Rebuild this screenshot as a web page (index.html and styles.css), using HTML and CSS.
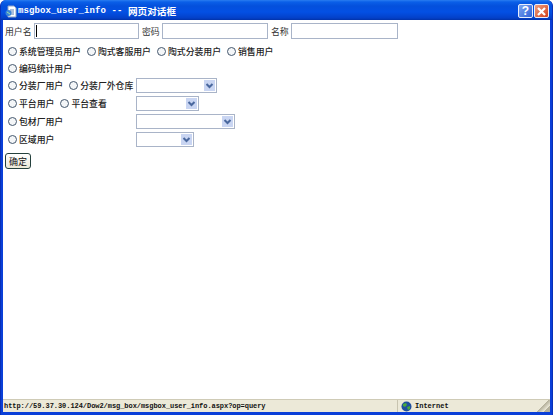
FILE: index.html
```html
<!DOCTYPE html>
<html lang="zh">
<head>
<meta charset="utf-8">
<title>msgbox_user_info</title>
<link rel="stylesheet" href="styles.css">
</head>
<body>
<div class="window">
  <header class="titlebar">
    <svg class="page-icon" width="13" height="13" viewBox="0 0 13 13"><path d="M3 1h6l2 2v9H3z" fill="#fff" stroke="#8fa4c8"/><path d="M5 5h4M5 7h4M5 9h4" stroke="#5b7fb8"/><circle cx="3.5" cy="8" r="3" fill="#3b86d8"/><path d="M2 7l3 2" stroke="#9fe0a0"/></svg>
    <span class="title-latin">msgbox_user_info -- </span><span class="title-cjk">网页对话框</span>
    <div class="title-buttons">
      <div class="tbtn help">?</div>
      <div class="tbtn close"><svg width="11" height="11" viewBox="0 0 11 11"><path d="M2 2l7 7M9 2l-7 7" stroke="#fff" stroke-width="2.2"/></svg></div>
    </div>
  </header>
  <main class="content">
    <div class="login-row">
      <label class="lbl l1">用户名</label><div class="field f1"><span class="caret"></span></div>
      <label class="lbl l2">密码</label><div class="field f2"></div>
      <label class="lbl l3">名称</label><div class="field f3"></div>
    </div>
    <div class="opt-row r1">
      <span class="opt gap6"><input type="radio" class="radio"><b>系统管理员用户</b></span>
      <span class="opt gap6"><input type="radio" class="radio"><b>陶式客服用户</b></span>
      <span class="opt gap6"><input type="radio" class="radio"><b>陶式分装用户</b></span>
      <span class="opt"><input type="radio" class="radio"><b>销售用户</b></span>
    </div>
    <div class="opt-row r2"><span class="opt"><input type="radio" class="radio"><b>编码统计用户</b></span></div>
    <div class="opt-row sel-row">
      <div class="opts"><span class="opt gap6"><input type="radio" class="radio"><b>分装厂用户</b></span><span class="opt"><input type="radio" class="radio"><b>分装厂外仓库</b></span></div>
      <div class="sel w81"><span class="arrow"><svg width="9" height="6" viewBox="0 0 9 6"><path d="M1.5 1l3 3 3-3" fill="none" stroke="#4a689e" stroke-width="2"/></svg></span></div>
    </div>
    <div class="opt-row sel-row">
      <div class="opts"><span class="opt gap6"><input type="radio" class="radio"><b>平台用户</b></span><span class="opt"><input type="radio" class="radio"><b>平台查看</b></span></div>
      <div class="sel w63"><span class="arrow"><svg width="9" height="6" viewBox="0 0 9 6"><path d="M1.5 1l3 3 3-3" fill="none" stroke="#4a689e" stroke-width="2"/></svg></span></div>
    </div>
    <div class="opt-row sel-row">
      <div class="opts"><span class="opt"><input type="radio" class="radio"><b>包材厂用户</b></span></div>
      <div class="sel w99"><span class="arrow"><svg width="9" height="6" viewBox="0 0 9 6"><path d="M1.5 1l3 3 3-3" fill="none" stroke="#4a689e" stroke-width="2"/></svg></span></div>
    </div>
    <div class="opt-row sel-row">
      <div class="opts"><span class="opt"><input type="radio" class="radio"><b>区域用户</b></span></div>
      <div class="sel w58"><span class="arrow"><svg width="9" height="6" viewBox="0 0 9 6"><path d="M1.5 1l3 3 3-3" fill="none" stroke="#4a689e" stroke-width="2"/></svg></span></div>
    </div>
    <button class="ok" type="button">确定</button>
  </main>
  <footer class="statusbar">
    <div class="status-url">http://59.37.30.124/Dow2/msg_box/msgbox_user_info.aspx?op=query</div>
    <div class="status-zone">
      <svg width="11" height="11" viewBox="0 0 11 11"><circle cx="5.5" cy="5.5" r="5" fill="#1f4f9e"/><path d="M2 3l3-1 1 2-2 2-2-1zM6 6l3-1 0 3-2 1z" fill="#49a83c"/></svg>
      <span>Internet</span>
    </div>
    <div class="status-grip"></div>
  </footer>
</div>
</body>
</html>
```
FILE: styles.css
```css
* { box-sizing: border-box; }
html, body { margin: 0; padding: 0; }
body { width: 553px; height: 415px; overflow: hidden; font-family: "Noto Sans CJK SC", sans-serif; }
.window {
  width: 553px; height: 415px; display: flex; flex-direction: column;
  background: #0a3fd8; border-radius: 6px 6px 0 0;
  padding: 0 2px 3px;
  border-left: 1px solid #0830b8; border-right: 1px solid #0830b8;
  overflow: hidden;
}
.titlebar {
  height: 20px; flex: none; display: flex; align-items: center; color: #fff;
  margin: 0 -3px; padding: 2px 4px 0 5px;
  background: linear-gradient(#2a7df0 0, #0a5fe8 2px, #0450dc 6px, #0350e4 12px, #0340c8 18px, #0232a8 20px);
  white-space: pre;
}
.page-icon { margin-right: 0; flex: none; }
.title-latin { font: bold 9px "Liberation Mono", monospace; letter-spacing: 0.1px; }
.title-cjk { font: bold 9.6px "Noto Sans CJK SC", sans-serif; }
.title-buttons { margin-left: auto; display: flex; gap: 1px; }
.tbtn {
  width: 15px; height: 14px; border: 1px solid #e8eefc; border-radius: 2px;
  display: flex; align-items: center; justify-content: center; color: #fff;
  font: bold 12px "Liberation Sans", sans-serif;
}
.help { background: linear-gradient(135deg, #7ea6f0, #2f62d8); }
.close { background: linear-gradient(135deg, #f0a080, #d0401c); }
.content { flex: 1; background: #fff; padding: 3px 0 0 2px; font-size: 8.85px; color: #222; min-height: 0; }
.login-row { display: flex; align-items: center; height: 16px; }
.lbl { color: #333; white-space: nowrap; line-height: 16px; padding-top: 1px; }
.l1 { width: 29px; }
.l2 { width: 23px; padding-left: 3px; }
.l3 { width: 23px; padding-left: 3px; }
.field { height: 16px; border: 1px solid #a9b4c8; background: #fff; display: flex; align-items: center; }
.f1 { width: 105px; }
.f2 { width: 106px; }
.f3 { width: 107px; }
.caret { width: 1px; height: 12px; background: #000; margin-left: 1px; }
.opt-row { display: flex; align-items: center; padding-left: 3px; }
.r1 { height: 18px; margin-top: 3px; }
.r2 { height: 17px; }
.sel-row { height: 17px; margin-bottom: 1px; }
.opts { display: flex; align-items: center; width: 128px; flex: none; }
.opt { display: inline-flex; align-items: center; white-space: nowrap; }
.opt b { font-weight: 500; line-height: 12px; color: #222; padding-top: 1px; }
.gap6 { margin-right: 6px; }
.radio {
  appearance: none; -webkit-appearance: none; width: 9px; height: 9px; margin: 0 2px 0 0; flex: none;
  border: 1px solid #45586e; border-radius: 50%; background: #f4f6f8;
}
.sel { height: 15px; border: 1px solid #a9b4c8; background: #fff; display: flex; justify-content: flex-end; padding: 1px; }
.arrow { width: 11px; background: #c9d5f2; display: flex; align-items: center; justify-content: center; }
.w81 { width: 81px; }
.w63 { width: 63px; }
.w99 { width: 99px; }
.w58 { width: 58px; }
.ok {
  display: block; margin: 5px 0 0 0; width: 26px; height: 16px; padding: 0;
  font: 9px "Noto Sans CJK SC", sans-serif; color: #111;
  background: linear-gradient(#fff, #ece9d8); border: 1px solid #24403c; border-radius: 3px;
}
.statusbar {
  height: 13px; flex: none; display: flex; background: #ece9d8;
  font: 7px "Liberation Mono", monospace; color: #111; align-items: stretch;
  border-top: 1px solid #cfcbb6;
}
.status-url { flex: 1; padding-left: 1px; line-height: 12px; font-weight: bold; white-space: nowrap; letter-spacing: -0.05px; }
.status-zone { width: 139px; display: flex; align-items: center; gap: 3px; padding-left: 3px; border-left: 1px solid #c8c4b0; font-weight: bold; }
.status-grip { width: 14px; background: linear-gradient(135deg, transparent 50%, #b5b19c 50%, #ece9d8 75%, #b5b19c 75%); }
```
